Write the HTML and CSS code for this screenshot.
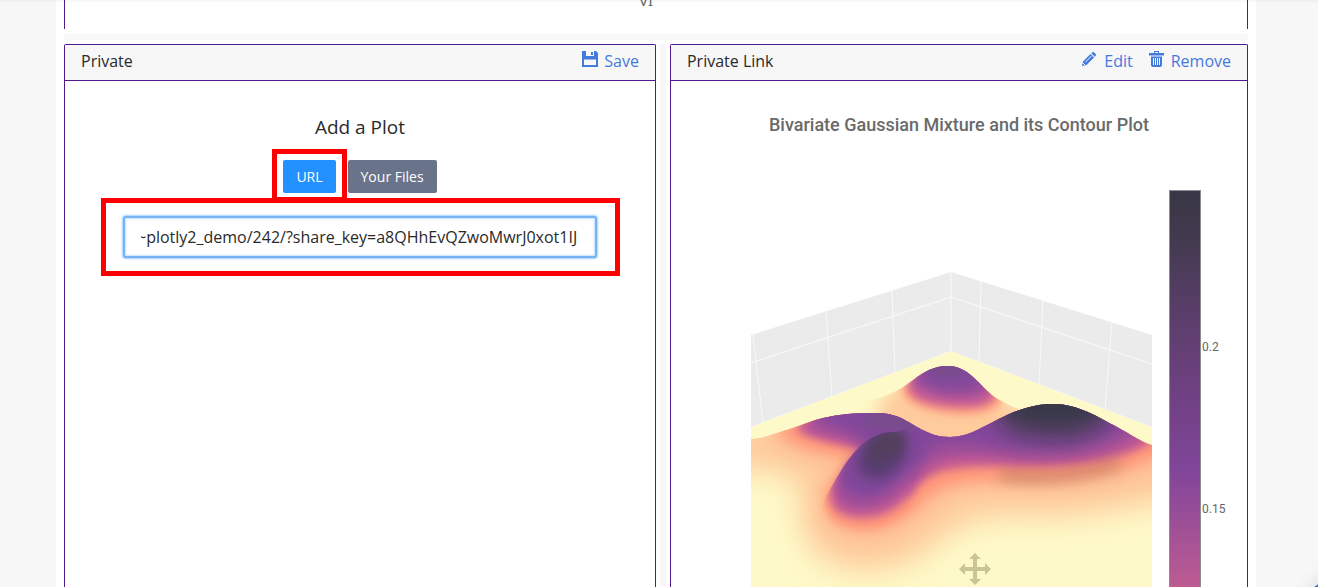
FILE: index.html
```html
<!DOCTYPE html>
<html lang="en">
<head>
<meta charset="utf-8">
<title>Dashboard</title>
<link rel="stylesheet" href="styles.css">
</head>
<body>
<main class="board">
  <section class="panel-tail"><span class="axis-title">VI</span></section>
  <div class="row-divider"></div>
  <div class="columns">
    <section class="card card-form">
      <header class="card-head">
        <h2 class="card-title">Private</h2>
        <nav class="actions">
          <a class="action" href="#"><svg class="icon" viewBox="0 0 16 16" width="16" height="16"><path fill-rule="evenodd" d="M0 0h4v5h8V0h2l2 2v14H0zM2 8.500v5.500h12V8.500zM9 1h2v3H9z"/></svg>Save</a>
        </nav>
      </header>
      <div class="form">
        <h3 class="form-title">Add a Plot</h3>
        <div class="buttons">
          <span class="mark mark-button"><button class="btn btn-primary" type="button">URL</button></span>
          <button class="btn" type="button">Your Files</button>
        </div>
        <div class="mark mark-field"><input class="field" type="text" aria-label="Plot URL" value="~plotly2_demo/242/?share_key=a8QHhEvQZwoMwrJ0xot1IJ"></div>
      </div>
    </section>
    <div class="col-divider"></div>
    <section class="card card-plot">
      <header class="card-head">
        <h2 class="card-title">Private Link</h2>
        <nav class="actions">
          <a class="action" href="#"><svg class="icon" viewBox="0 0 16 16" width="16" height="16"><path d="M0 15l1-4.500 7.500-7.500 3.500 3.500-7.500 7.500zM9.300 2.200l1-.9q.8-.7 1.600 0l1.800 1.800q.7.800 0 1.600l-.9 1z"/><path d="M3.500 11l6-6M1 12l2 2" stroke="#f7f7f7" stroke-width="1" fill="none"/></svg>Edit</a>
          <a class="action" href="#"><svg class="icon" viewBox="0 0 16 16" width="16" height="16"><path fill-rule="evenodd" d="M5 2V0h5v2h5v2.500H0V2zM6 2h3V1H6zM2 5.500h11V14q0 2-2 2H4q-2 0-2-2zM4 7v7h1V7zM6 7v7h1V7zM8 7v7h1V7zM10 7v7h1V7z"/></svg>Remove</a>
        </nav>
      </header>
      <div class="plot">
        <h3 class="plot-title">Bivariate Gaussian Mixture and its Contour Plot</h3>
        <div class="plot-body">
          <svg class="scene" viewBox="751 272 401 315" width="401" height="315" role="img" aria-label="Surface plot">
            <defs>
              <filter id="b4" x="-40%" y="-60%" width="180%" height="220%"><feGaussianBlur stdDeviation="4"/></filter>
              <filter id="b7" x="-60%" y="-100%" width="220%" height="300%"><feGaussianBlur stdDeviation="7"/></filter>
              <filter id="b10" x="-60%" y="-150%" width="220%" height="400%"><feGaussianBlur stdDeviation="10"/></filter>
              <filter id="b14" x="-40%" y="-60%" width="180%" height="220%"><feGaussianBlur stdDeviation="15"/></filter>
              <clipPath id="floor"><path d="M751 427L951 351L1152 427V587H751z"/></clipPath>
              <clipPath id="back"><path d="M751 500V420L880 398C900 390 905 386 917 377C930 368 939 366 948 366C958 366 965 370 973 377C982 385 987 392 996 398C1005 403 1012 407 1025 411V500z"/></clipPath>
              <clipPath id="front"><path d="M751 439C765 438 773 434 783 431C797 427 810 421 823 418C840 414 856 413 873 413C895 412 905 420 917 427C930 434 938 437 950 437C970 437 985 425 1007 415C1023 408 1037 404 1053 404C1078 404 1098 417 1117 427C1130 434 1141 442 1152 445V587H751z"/></clipPath>
              <clipPath id="hill"><path d="M751 587V560L815 520C822 503 833 483 844 466C855 450 870 432 893 432C905 432 915 420 935 415H1152V587z"/></clipPath>
            </defs>
            <path fill="#ebebeb" d="M751 335L951 272L1152 335V427L951 351L751 427z"/>
            <path fill="none" stroke="#fafafa" stroke-width="1" d="M751 363L951 297L1152 364M951 272V351M753 335L763 423M826 312L832 396M892 291L895 372M981 281L979 362M1043 301L1039 384M1112 322L1105 409"/>
            <g clip-path="url(#floor)">
              <path fill="#fef9c8" d="M751 427L951 351L1152 427V587H751z"/>
              <g clip-path="url(#back)">
                <path filter="url(#b10)" fill="#fecb9c" d="M882 396L915 375H980L1010 402L1050 420L1000 460H920L875 428z"/>
                <path filter="url(#b4)" fill="#ff9b7e" d="M902 388L915 370H978L1002 396C1000 412 978 415 956 414C928 412 904 404 902 388z"/>
                <path filter="url(#b4)" fill="#c45b96" d="M908 386L920 355H975L995 394C993 407 972 408 954 407C928 405 909 399 908 386z"/>
                <path filter="url(#b4)" fill="#9a4e99" d="M914 380L925 350H970L988 390C981 397 965 398 952 397C935 396 916 389 914 380z"/>
                <path filter="url(#b4)" fill="#82489b" d="M922 378L925 350H970L981 381C975 388 965 389 952 388C937 387 924 383 922 378z"/>
                <ellipse filter="url(#b4)" fill="#784c8b" cx="947" cy="370" rx="17" ry="7"/>
              </g>
              <g clip-path="url(#front)">
                <path fill="#fef9c8" d="M740 400H1160V600H740z"/>
                <path filter="url(#b14)" fill="#fecb9c" d="M715 430L830 400H1200V492C1140 508 1080 518 1030 517C980 513 960 522 932 547C905 568 870 577 833 564C800 552 796 505 802 485C795 473 765 473 715 463z"/>
                <path filter="url(#b10)" fill="#fec094" d="M765 431L830 400H1175V469C1120 492 1060 493 1010 491C960 486 947 497 924 518C898 538 870 548 845 539C812 528 815 500 827 476C844 460 802 462 765 440z"/>
                <path filter="url(#b7)" fill="#ff9679" d="M780 427L830 400H1170V450C1125 475 1070 483 1020 482C960 478 944 485 924 501C904 520 885 531 858 528C830 525 821 508 830 484L854 460C838 455 808 454 780 435z"/>
                <path filter="url(#b4)" fill="#c35a95" d="M798 425L830 395H1150V443C1120 461 1070 468 1025 467C970 465 946 467 927 478C906 494 895 517 858 514C828 510 834 482 850 463L866 454C850 444 822 445 798 431z"/>
                <path filter="url(#b4)" fill="#a54f97" d="M810 424L830 392H1138V437C1110 454 1065 461 1023 459C975 455 943 453 927 467C908 485 893 506 860 503L850 470L868 449C853 436 830 438 810 429z"/>
                <path filter="url(#b7)" fill="#82479b" d="M820 416L830 390H1128V428C1100 447 1060 452 1020 450C980 446 940 438 926 453C910 471 893 494 862 490C842 486 850 463 868 444C855 432 840 429 820 422z"/>
                <path filter="url(#b10)" fill="#5b4169" d="M998 385H1108V424C1090 440 1065 444 1040 441C1012 438 994 430 998 416z"/>
                <ellipse filter="url(#b10)" fill="#363947" cx="1053" cy="407" rx="50" ry="19"/>
                <ellipse filter="url(#b4)" fill="#784c8b" cx="892" cy="421" rx="30" ry="9"/>
                <path filter="url(#b7)" fill="none" stroke="#775a42" stroke-opacity=".35" stroke-width="11" d="M1000 475C1045 481 1085 475 1120 463"/>
                <g clip-path="url(#hill)">
                  <path filter="url(#b4)" fill="#ff9679" d="M828 490L850 455L890 470L912 503C896 520 882 528 858 527C832 524 822 509 828 490z"/>
                  <path filter="url(#b4)" fill="#c35a95" d="M833 482L850 445L890 450L914 490C899 508 885 519 858 518C833 516 825 501 833 482z"/>
                  <path filter="url(#b4)" fill="#9f4e98" d="M838 474L855 438L900 445L917 474C900 496 885 509 858 508C838 506 832 492 838 474z"/>
                  <path filter="url(#b4)" fill="#82479b" d="M843 468L860 433L910 428L924 452C902 480 883 497 862 496C843 494 838 482 843 468z"/>
                  <ellipse filter="url(#b7)" fill="#573e70" cx="882" cy="456" rx="27" ry="20" transform="rotate(-42 882 456)"/>
                  <ellipse filter="url(#b7)" fill="#51405c" cx="886" cy="444" rx="21" ry="14" transform="rotate(-30 886 444)"/>
                </g>
              </g>
            </g>
            <path fill="#cac592" d="M975 553l6 6h-4v8h8v-4l6 6l-6 6v-4h-8v8h4l-6 6l-6-6h4v-8h-8v4l-6-6l6-6v4h8v-8h-4z"/>
          </svg>
          <div class="colorbar"></div>
          <div class="ticks"><span>0.2</span><span>0.15</span></div>
        </div>
      </div>
    </section>
  </div>
</main>
<div class="top-shade"></div>
<button class="help" type="button" aria-label="Help"></button>
</body>
</html>
```
FILE: styles.css
```css
* { box-sizing: border-box; }
body {
  margin: 0;
  height: 100vh;
  overflow: hidden;
  padding: 0 62px 0 56px;
  background: #f7f7f7;
  color: #2a2a2a;
  font: 16px/24px "Open Sans", sans-serif;
}
h2, h3 { margin: 0; font-weight: 400; }
.board {
  display: flex;
  flex-direction: column;
  height: 100vh;
  padding: 0 8px;
  background: #fff;
}
.panel-tail {
  display: flex;
  flex: none;
  justify-content: center;
  align-items: flex-start;
  height: 29px;
  overflow: hidden;
  border: solid #4f1a8b;
  border-width: 0 1px;
}
.axis-title {
  margin: -9px 20px 0 0;
  color: #666;
  font: 15px/18px "Noto Sans", sans-serif;
}
.row-divider { flex: none; height: 6px; margin: 5px 0 4px; background: #f7f7f7; }
.columns { display: flex; flex: 1; gap: 4px; min-height: 0; }
.col-divider { flex: none; width: 6px; background: #f7f7f7; }
.card {
  overflow: hidden;
  border: 1px solid #4f1a8b;
  border-bottom: 0;
  border-radius: 2px 2px 0 0;
  min-width: 0;
}
.card-form { flex: 592 1 0; }
.card-plot { flex: 578 1 0; }
.card-head {
  display: flex;
  justify-content: space-between;
  height: 36px;
  padding: 4px 16px 0;
  background: #f7f7f7;
  border-bottom: 1px solid #4f1a8b;
}
.card-title { font-size: 16px; }
.actions { display: flex; gap: 16px; }
.action { display: flex; gap: 6px; color: #447adb; text-decoration: none; }
.icon { margin-top: 2px; fill: #447adb; }
.form { display: flex; flex-direction: column; align-items: center; padding: 32px 58px; }
.form-title { font-size: 19px; line-height: 28px; }
.buttons { display: flex; gap: 12px; margin: 19px 0 23px; }
.btn {
  height: 33px;
  padding: 0 13px;
  border: 0;
  border-radius: 2px;
  background: #69738a;
  color: #fff;
  font: 500 14px/20px "Open Sans", sans-serif;
}
.btn-primary { background: #2391ff; }
.mark { position: relative; }
.mark::after {
  content: "";
  position: absolute;
  border: 5px solid #f00;
  pointer-events: none;
}
.mark-button { display: flex; }
.mark-button::after { inset: -11px -11px -9px; }
.mark-field { align-self: stretch; }
.mark-field::after { inset: -18px -23px -18px -22px; }
.field {
  display: block;
  width: 100%;
  height: 42px;
  padding: 0 16px;
  border: 2px solid #77b3f3;
  border-radius: 3px;
  outline: 0;
  box-shadow: 0 0 2px 1px #a5d0fb, inset 0 0 2px 1px #c5e0fc;
  color: #2a2a2a;
  font: 16px/24px "Open Sans", sans-serif;
  text-indent: -4px;
}
.plot { padding-top: 32px; }
.plot-title {
  color: #6a6a6a;
  font: 500 18px/24px Roboto, sans-serif;
  text-align: center;
}
.plot-body { display: flex; justify-content: flex-end; margin-top: 53px; padding-right: 21px; }
.scene { display: block; margin-top: 82px; }
.colorbar {
  width: 32px;
  height: 660px;
  margin-left: 17px;
  border: 1px solid #8c8c94;
  background: linear-gradient(#383744 0, #433a50 50px, #593e69 120px, #6c407e 190px, #81459a 280px, #c25d92 405px, #ff9679 500px, #fef9c8 660px);
}
.ticks {
  display: flex;
  flex-direction: column;
  gap: 146px;
  width: 25px;
  padding: 149px 0 0 1px;
  color: #666;
  font: 12px/16px Roboto, sans-serif;
}
.top-shade {
  position: fixed;
  inset: 0 0 auto;
  height: 3px;
  background: linear-gradient(rgba(0, 0, 0, .04), transparent);
}
.help {
  position: fixed;
  right: -52px;
  bottom: -54px;
  width: 64px;
  height: 64px;
  border: 0;
  border-radius: 50%;
  background: #2a6fdb;
  box-shadow: 0 1px 20px rgba(0, 0, 0, .15);
}
```
